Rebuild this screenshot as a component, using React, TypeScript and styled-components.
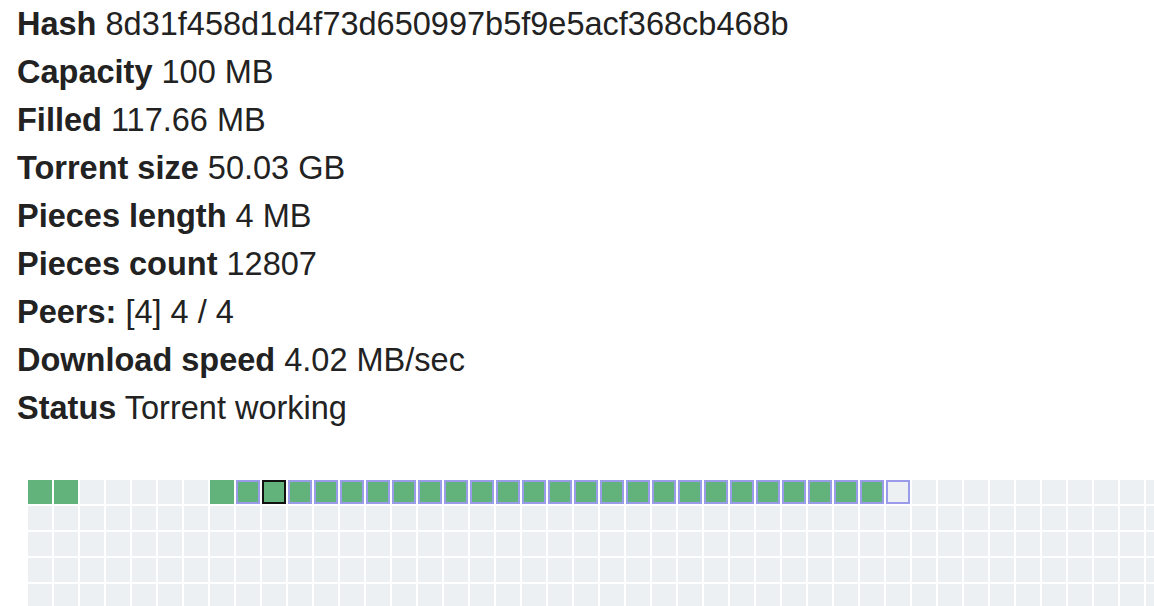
import React from 'react'
import styled, { createGlobalStyle } from 'styled-components'

const GlobalStyle = createGlobalStyle`
  html, body {
    margin: 0;
    padding: 0;
    background: #fff;
    overflow: hidden;
  }
  body {
    font-family: "Liberation Sans", Arial, Helvetica, sans-serif;
    color: #222;
  }
`

const Page = styled.div`
  display: flex;
  flex-direction: column;
  padding: 0 0 0 17px;
`

const InfoList = styled.div`
  display: flex;
  flex-direction: column;
  font-size: 32.5px;
  line-height: 48px;
`

const InfoRow = styled.div`
  white-space: nowrap;
`

const Label = styled.b`
  font-weight: 700;
`

const GridViewport = styled.div`
  margin: 48px 0 0 11px;
  overflow: hidden;
`

const PiecesGrid = styled.div`
  display: grid;
  grid-template-columns: repeat(44, 24px);
  grid-auto-rows: 24px;
  gap: 2px;
`

type PieceState = 'empty' | 'done' | 'active' | 'pending' | 'selected'

const Piece = styled.div<{ $state: PieceState }>`
  box-sizing: border-box;
  width: 24px;
  height: 24px;
  background: ${({ $state }) =>
    $state === 'empty' || $state === 'pending' ? '#edf0f3' : '#62b27c'};
  border: ${({ $state }) =>
    $state === 'active' || $state === 'pending'
      ? '2px solid #9a9be9'
      : $state === 'selected'
      ? '2px solid #111'
      : 'none'};
`

const info: [string, string][] = [
  ['Hash', '8d31f458d1d4f73d650997b5f9e5acf368cb468b'],
  ['Capacity', '100 MB'],
  ['Filled', '117.66 MB'],
  ['Torrent size', '50.03 GB'],
  ['Pieces length', '4 MB'],
  ['Pieces count', '12807'],
  ['Peers:', '[4] 4 / 4'],
  ['Download speed', '4.02 MB/sec'],
  ['Status', 'Torrent working'],
]

const COLS = 44
const ROWS = 5

function pieceState(i: number): PieceState {
  if (i === 0 || i === 1 || i === 7) return 'done'
  if (i === 9) return 'selected'
  if (i >= 8 && i <= 32) return 'active'
  if (i === 33) return 'pending'
  return 'empty'
}

export default function App() {
  const pieces = Array.from({ length: COLS * ROWS }, (_, i) => pieceState(i))
  return (
    <>
      <GlobalStyle />
      <Page>
        <InfoList>
          {info.map(([label, value]) => (
            <InfoRow key={label}>
              <Label>{label}</Label> {value}
            </InfoRow>
          ))}
        </InfoList>
        <GridViewport>
          <PiecesGrid>
            {pieces.map((s, i) => (
              <Piece key={i} $state={s} />
            ))}
          </PiecesGrid>
        </GridViewport>
      </Page>
    </>
  )
}
